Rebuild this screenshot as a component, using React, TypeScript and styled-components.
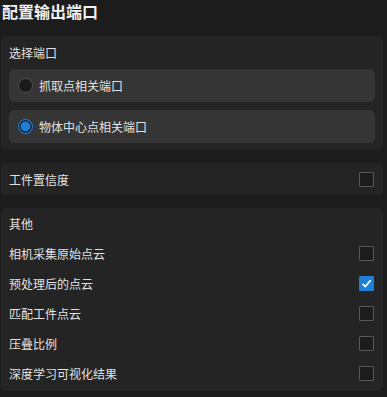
import styled, { createGlobalStyle } from 'styled-components'

const Global = createGlobalStyle`
  html, body { margin: 0; background: #1c1c1c; }
  body { font-family: "Noto Sans CJK SC", "Noto Sans", sans-serif; color: #e2e2e2; }
`

const Page = styled.div`
  width: 387px;
  height: 397px;
  padding: 0 4px 0 1px;
  box-sizing: border-box;
  display: flex;
  flex-direction: column;
`

const Title = styled.h1`
  margin: 0;
  padding: 0 0 0 1px;
  height: 36px;
  line-height: 22px;
  font-size: 16px;
  font-weight: 700;
  color: #f0f0f0;
`

const Panel = styled.section<{ $mt?: number; $pb?: number }>`
  background: #242424;
  border-radius: 5px;
  margin-top: ${p => p.$mt ?? 0}px;
  padding: 0 8px ${p => p.$pb ?? 0}px 8px;
  display: flex;
  flex-direction: column;
`

const Heading = styled.div`
  height: 33px;
  line-height: 33px;
  font-size: 12px;
`

const RadioRow = styled.label`
  display: flex;
  align-items: center;
  gap: 6px;
  height: 33px;
  padding-left: 9px;
  background: #353535;
  border-radius: 5px;
  font-size: 12px;
  & + & { margin-top: 8px; }
`

const Radio = styled.span<{ $on?: boolean }>`
  width: 15px;
  height: 15px;
  box-sizing: border-box;
  border-radius: 50%;
  border: 1.5px solid ${p => (p.$on ? '#1f7ed6' : '#505050')};
  background: ${p => (p.$on ? '#1f7ed6' : '#1a1a1a')};
  box-shadow: ${p => (p.$on ? 'inset 0 0 0 1.5px #1a1a1a' : 'none')};
`

const Row = styled.div<{ $h?: number }>`
  display: flex;
  align-items: center;
  justify-content: space-between;
  height: ${p => p.$h ?? 30}px;
  font-size: 12px;
  padding-right: 1px;
`

const Box = styled.span<{ $on?: boolean }>`
  width: 15px;
  height: 15px;
  box-sizing: border-box;
  border: 1px solid ${p => (p.$on ? '#1f7ed6' : '#585858')};
  background: ${p => (p.$on ? '#1f7ed6' : '#1c1c1c')};
  border-radius: 1px;
  display: flex;
  align-items: center;
  justify-content: center;
`

function Check({ on }: { on?: boolean }) {
  return (
    <Box $on={on}>
      {on && (
        <svg width="11" height="11" viewBox="0 0 11 11">
          <path d="M1.5 5.8 L4.3 8.5 L9.6 2.2" fill="none" stroke="#fff" strokeWidth="1.7" />
        </svg>
      )}
    </Box>
  )
}

const others: [string, boolean][] = [
  ['相机采集原始点云', false],
  ['预处理后的点云', true],
  ['匹配工件点云', false],
  ['压叠比例', false],
  ['深度学习可视化结果', false],
]

export default function App() {
  return (
    <Page>
      <Global />
      <Title>配置输出端口</Title>
      <Panel $pb={7}>
        <Heading>选择端口</Heading>
        <RadioRow><Radio />抓取点相关端口</RadioRow>
        <RadioRow><Radio $on />物体中心点相关端口</RadioRow>
      </Panel>
      <Panel $mt={13}>
        <Row $h={32}>工件置信度<Check /></Row>
      </Panel>
      <Panel $mt={13} $pb={3}>
        <Row>其他</Row>
        {others.map(([t, on]) => (
          <Row key={t}>{t}<Check on={on} /></Row>
        ))}
      </Panel>
    </Page>
  )
}
